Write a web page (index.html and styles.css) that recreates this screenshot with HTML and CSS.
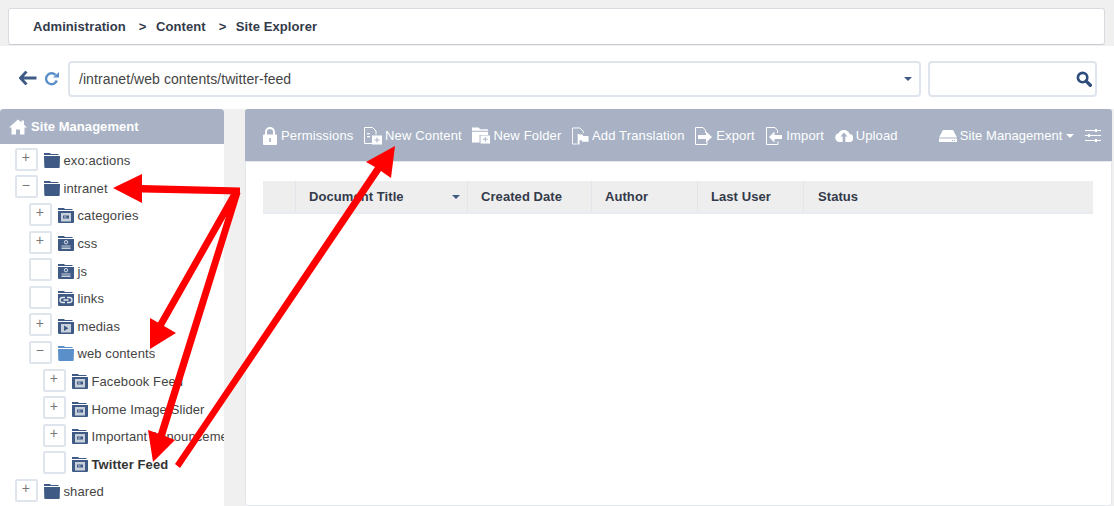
FILE: index.html
```html
<!DOCTYPE html>
<html lang="en">
<head>
<meta charset="utf-8">
<title>Site Explorer</title>
<link rel="stylesheet" href="styles.css">
</head>
<body>
<svg width="0" height="0" class="defs">
  <defs>
    <symbol id="folder" viewBox="0 0 16 15"><path d="M0 0h6l1 1h7.500v1H0z M0 3h16l-.3 11a1 1 0 0 1-1 1H1.300a1 1 0 0 1-1-1z" fill="currentColor"/></symbol>
    <symbol id="folder-doc" viewBox="0 0 16 15"><path d="M0 0h6l1 1h7.500v1H0z M0 3h16v11a1 1 0 0 1-1 1H1a1 1 0 0 1-1-1z" fill="#3f5a85"/><rect x="3" y="5" width="10" height="8.500" fill="#c8d0dc"/><path d="M5 7.500h6v3H5z" fill="#3f5a85"/><path d="M6 8.500h2.500v1H6z" fill="#c8d0dc"/></symbol>
    <symbol id="folder-code" viewBox="0 0 16 15"><path d="M0 0h6l1 1h7.500v1H0z M0 3h16v11a1 1 0 0 1-1 1H1a1 1 0 0 1-1-1z" fill="#3f5a85"/><circle cx="8" cy="6.200" r="1.700" fill="none" stroke="#dfe4ec"/><path d="M3.500 9.500h9v1h-9zM3.500 11.500h9v1.500h-9z" fill="#c8d0dc"/></symbol>
    <symbol id="folder-link" viewBox="0 0 16 15"><path d="M0 0h6l1 1h7.500v1H0z M0 3h16v11a1 1 0 0 1-1 1H1a1 1 0 0 1-1-1z" fill="#3f5a85"/><path d="M7 6.500H4.500a2.500 2.500 0 0 0 0 5H7M9 6.500h2.500a2.500 2.500 0 0 1 0 5H9M5.500 9h5" fill="none" stroke="#e6eaf0" stroke-width="1.300"/></symbol>
    <symbol id="folder-media" viewBox="0 0 16 15"><path d="M0 0h6l1 1h7.500v1H0z M0 3h16v11a1 1 0 0 1-1 1H1a1 1 0 0 1-1-1z" fill="#3f5a85"/><rect x="3" y="5" width="10" height="8.500" fill="#c8d0dc"/><path d="M6 6.500l4.500 2.700-4.500 2.700z" fill="#3f5a85"/></symbol>
  </defs>
</svg>

<div class="page">
  <div class="crumb-strip">
    <nav class="crumbs">
      <span>Administration</span><span class="sep">&gt;</span><span>Content</span><span class="sep">&gt;</span><span>Site Explorer</span>
    </nav>
  </div>

  <div class="pathbar">
    <svg class="nav-back" width="18" height="14" viewBox="0 0 18 14"><path d="M7.500 0.500L1.500 7l6 6.500M2 7H17.500" fill="none" stroke="#3f5a85" stroke-width="2.800"/></svg>
    <svg class="nav-refresh" width="15" height="15" viewBox="0 0 15 15"><path d="M12.800 9.500A5.500 5.500 0 1 1 11.500 3.800" fill="none" stroke="#5b8fc9" stroke-width="2.400"/><path d="M9 6.500h6V1z" fill="#5b8fc9"/></svg>
    <div class="address">
      <span>/intranet/web contents/twitter-feed</span>
      <i class="caret"></i>
    </div>
    <div class="search">
      <svg width="16" height="16" viewBox="0 0 17 17"><circle cx="7" cy="7" r="5" fill="none" stroke="#2f4d7c" stroke-width="2.800"/><path d="M10.800 10.800L15.200 15.200" stroke="#2f4d7c" stroke-width="3.600" stroke-linecap="round"/></svg>
    </div>
  </div>

  <div class="workspace">
    <aside class="sidebar">
      <div class="side-head">
        <svg width="18" height="16" viewBox="0 0 18 15"><path d="M9 0L0 8h2.500v7h4.500v-5h4v5h4.500V8H18l-3-2.700V1h-2.500v2z" fill="#fff"/></svg>
        <span>Site Management</span>
      </div>
      <ul class="tree">
        <li class="node"><b class="toggle">+</b><svg class="fi"><use href="#folder"/></svg><span>exo:actions</span></li>
        <li class="node"><b class="toggle">−</b><svg class="fi"><use href="#folder"/></svg><span>intranet</span></li>
        <li class="node lv1"><b class="toggle">+</b><svg class="fi"><use href="#folder-doc"/></svg><span>categories</span></li>
        <li class="node lv1"><b class="toggle">+</b><svg class="fi"><use href="#folder-code"/></svg><span>css</span></li>
        <li class="node lv1"><b class="toggle"></b><svg class="fi"><use href="#folder-code"/></svg><span>js</span></li>
        <li class="node lv1"><b class="toggle"></b><svg class="fi"><use href="#folder-link"/></svg><span>links</span></li>
        <li class="node lv1"><b class="toggle">+</b><svg class="fi"><use href="#folder-media"/></svg><span>medias</span></li>
        <li class="node lv1"><b class="toggle">−</b><svg class="fi open"><use href="#folder"/></svg><span>web contents</span></li>
        <li class="node lv2"><b class="toggle">+</b><svg class="fi"><use href="#folder-doc"/></svg><span>Facebook Feed</span></li>
        <li class="node lv2"><b class="toggle">+</b><svg class="fi"><use href="#folder-doc"/></svg><span>Home Image Slider</span></li>
        <li class="node lv2"><b class="toggle">+</b><svg class="fi"><use href="#folder-doc"/></svg><span>Important Announcements</span></li>
        <li class="node lv2 current"><b class="toggle"></b><svg class="fi"><use href="#folder-doc"/></svg><span>Twitter Feed</span></li>
        <li class="node"><b class="toggle">+</b><svg class="fi"><use href="#folder"/></svg><span>shared</span></li>
      </ul>
    </aside>

    <main class="panel">
      <div class="toolbar">
        <a class="tool"><svg width="16" height="18" viewBox="0 0 15 18"><path d="M3.500 8V5a4 4 0 0 1 8 0v3" fill="none" stroke="#fff" stroke-width="2"/><path d="M1.500 7.500h12a1 1 0 0 1 1 1V17a1 1 0 0 1-1 1h-12a1 1 0 0 1-1-1V8.500a1 1 0 0 1 1-1z" fill="#fff"/><rect x="6.700" y="11" width="1.600" height="4" fill="#a8b2c4"/></svg>Permissions</a>
        <a class="tool"><svg width="18" height="18" viewBox="0 0 18 18"><path d="M8 16.500H.5V.5h8l3.500 3.500v3.500" fill="none" stroke="#fff"/><path d="M3 6h3v1.200H3zM3 9h3v1.200H3z" fill="#fff"/><rect x="8" y="8.500" width="10" height="9" fill="#fff"/><path d="M12.500 10.500h1v2h2v1h-2v2h-1v-2h-2v-1h2z" fill="#a8b2c4"/></svg>New Content</a>
        <a class="tool"><svg width="18" height="17" viewBox="0 0 19 17"><path d="M0 0h7l1.500 2H17v1.500H0zM0 4.500h17V8H8v8H0z" fill="#fff"/><rect x="9" y="8.500" width="10" height="8.500" fill="#fff"/><path d="M13.500 10h1v2h2v1h-2v2h-1v-2h-2v-1h2z" fill="#a8b2c4"/></svg>New Folder</a>
        <a class="tool"><svg width="17" height="18" viewBox="0 0 18 18"><path d="M5.500 17.500H.5V.5h8l3.500 3.500v2" fill="none" stroke="#fff"/><path d="M6 7h2v11H6zM8 7.500h3l1 1.500h5.500v6H11l-1-1.500H8z" fill="#fff"/></svg>Add Translation</a>
        <a class="tool"><svg width="18" height="18" viewBox="0 0 18 18"><path d="M10.500 6V3.500L8 .5H.5v17H12v-3" fill="none" stroke="#fff"/><path d="M3 8h8V4.500l6 5.500-6 5.500V12H3z" fill="#fff"/></svg>Export</a>
        <a class="tool"><svg width="18" height="18" viewBox="0 0 18 18"><path d="M12.500 6V3.500L10 .5H1.500v17H13v-3" fill="none" stroke="#fff"/><path d="M17 8H9.500V4.500L4 10l5.500 5.500V12H17z" fill="#fff"/></svg>Import</a>
        <a class="tool"><svg width="18" height="13" viewBox="0 0 18 13"><path d="M4.500 13A4.500 4.500 0 0 1 3.500 4.200 6 6 0 0 1 14.500 5 4 4 0 0 1 14 13z" fill="#fff"/><path d="M9 3.500L5.500 7.500h2.200V13h2.600V7.500h2.200z" fill="#a8b2c4"/></svg>Upload</a>
        <span class="tool-gap"></span>
        <a class="tool site"><svg width="18" height="12" viewBox="0 0 18 12"><path d="M4 0h10l4 7.500H0z" fill="#fff"/><path d="M0 8.500h18V12H0z" fill="#fff"/><path d="M13 10h1v1h-1zM15 10h1v1h-1z" fill="#a8b2c4"/></svg>Site Management<i class="caret white"></i></a>
        <svg class="tune" width="16" height="13" viewBox="0 0 16 13"><path d="M0 1.500h16M0 6.500h16M0 11.500h16" stroke="#fff" stroke-width="1"/><path d="M10 0h2v3h-2zM3 5h2v3H3zM10 10h2v3h-2z" fill="#fff"/></svg>
      </div>
      <div class="table-wrap">
        <div class="thead">
          <div class="th th-check"></div>
          <div class="th th-title">Document Title<i class="caret"></i></div>
          <div class="th th-date">Created Date</div>
          <div class="th th-author">Author</div>
          <div class="th th-user">Last User</div>
          <div class="th th-status">Status</div>
        </div>
      </div>
    </main>
  </div>

  <svg class="arrows" width="1114" height="506" viewBox="0 0 1114 506">
    <g fill="#fe0000" stroke="none">
      <path d="M113 188L142 174V185L240 187.500V194.500L142 192.500V203z"/>
      <path d="M150 349L150 318 158 322.500 234 188.500 240 192 164 326 176 333z"/>
      <path d="M153 462L148 430 158 433.500 234 191 240.500 193 165 436 175 440z"/>
      <path d="M395 146L391 178 381 171 180 468 175 464 375 167 366 162z"/>
    </g>
  </svg>
</div>
</body>
</html>
```

FILE: styles.css
```css
* { box-sizing: border-box; }
html, body { margin: 0; padding: 0; }
body {
  width: 1114px;
  height: 506px;
  overflow: hidden;
  font-family: "Liberation Sans", Arial, sans-serif;
  font-size: 13px;
  color: #333;
  background: #fff;
}
.defs { position: absolute; }
.page { position: relative; width: 1114px; height: 506px; overflow: hidden; display: flex; flex-direction: column; }

.crumb-strip { height: 46px; padding: 8px 9px 0 8px; background: #f0f0f0; }
.crumbs {
  height: 37px;
  display: flex;
  align-items: center;
  padding-left: 24px;
  background: #fff;
  border: 1px solid #d8dbe0;
  border-bottom-color: #c8ccd2;
  border-radius: 3px;
  font-weight: 700;
  font-size: 13px;
  color: #333a4a;
  letter-spacing: 0.08px;
}
.sep { margin: 0 9.5px 0 13px; }

.pathbar { height: 63px; padding-top: 15px; display: flex; align-items: flex-start; }
.nav-back { margin: 10px 0 0 19px; flex: none; }
.nav-refresh { margin: 10px 0 0 7px; flex: none; }
.address {
  margin-left: 8.5px;
  width: 853px;
  height: 36px;
  display: flex;
  align-items: center;
  justify-content: space-between;
  padding: 0 7px 0 9.5px;
  background: #fff;
  border: 2px solid #dfe5ed;
  border-radius: 4px;
  font-size: 14px;
  letter-spacing: 0.06px;
  color: #444;
}
.search {
  margin-left: 7.5px;
  width: 168.5px;
  height: 36px;
  display: flex;
  align-items: center;
  justify-content: flex-end;
  padding-right: 2.5px;
  background: #fff;
  border: 2px solid #dfe5ed;
  border-radius: 4px;
}
.caret {
  display: inline-block;
  width: 0;
  height: 0;
  border-left: 4px solid transparent;
  border-right: 4px solid transparent;
  border-top: 4px solid #3f5a85;
}
.caret.white { border-top-color: #fff; margin-left: 1px; }

.workspace { flex: 1; display: flex; gap: 21px; background: #f0f0f0; min-height: 0; }
.sidebar { width: 224px; flex: none; background: #fff; overflow: hidden; border-radius: 3px 3px 0 0; }
.side-head {
  height: 35px;
  display: flex;
  align-items: center;
  gap: 4px;
  padding-left: 9px;
  background: #a8b2c4;
  color: #fff;
  font-weight: 700;
  font-size: 13px;
  letter-spacing: 0.05px;
  border-radius: 3px 3px 0 0;
}
.tree { list-style: none; margin: 0; padding: 3px 0 0; }
.node { height: 27.6px; display: flex; align-items: center; padding-left: 14.5px; white-space: nowrap; color: #444; font-size: 13px; letter-spacing: 0.1px; }
.lv1 { padding-left: 28.5px; }
.lv2 { padding-left: 42.5px; }
.toggle {
  flex: none;
  width: 23px;
  height: 23px;
  margin: -3px 6px 0 0;
  display: flex;
  align-items: center;
  justify-content: center;
  border: 2px solid #dfe5ed;
  border-radius: 2px;
  font-weight: 400;
  font-size: 14px;
  color: #777;
  padding-bottom: 4px;
}
.fi { flex: none; width: 16px; height: 15px; margin-right: 4px; color: #3f5a85; }
.fi.open { color: #5b8fc9; }
.current { font-weight: 700; color: #333; }

.panel { width: 867px; flex: none; background: #fff; border-radius: 3px; box-shadow: inset 0 0 0 1px #e4e7ec; }
.toolbar {
  height: 53px;
  display: flex;
  align-items: center;
  gap: 10.6px;
  padding: 1px 11px 0 17px;
  background: #a8b2c4;
  border-bottom: 1px solid #e4e7ec;
  border-radius: 3px 3px 0 0;
  color: #fff;
  font-size: 13px;
  letter-spacing: 0.15px;
}
.tool { display: flex; align-items: center; gap: 3px; white-space: nowrap; }
.tool-gap { flex: 1; }
.tool.site { gap: 3px; letter-spacing: 0.05px; }
.tune { flex: none; }

.table-wrap { padding: 19px 19px 0 18px; }
.thead {
  display: flex;
  height: 33px;
  background: #eee;
  border-bottom: 2px solid #e8ebf0;
  font-weight: 700;
  font-size: 13px;
  letter-spacing: 0.07px;
  color: #333a4a;
}
.th { display: flex; align-items: center; padding-left: 13px; border-right: 1px solid #e2e5ea; flex: none; }
.th-check { width: 33px; }
.th-title { width: 172px; justify-content: space-between; padding-right: 7px; }
.th-date { width: 124px; }
.th-author { width: 106px; }
.th-user { width: 106px; }
.th-status { flex: 1; border-right: 0; padding-left: 14px; }

.arrows { position: absolute; left: 0; top: 0; pointer-events: none; }
```
